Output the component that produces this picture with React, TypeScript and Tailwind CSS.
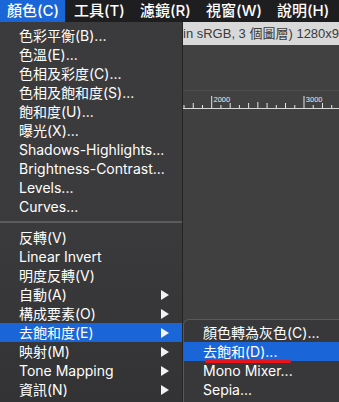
import React from 'react';

type Item = { label: string; sub?: boolean; active?: boolean };

const groupA: Item[] = [
  { label: '色彩平衡(B)...' },
  { label: '色溫(E)...' },
  { label: '色相及彩度(C)...' },
  { label: '色相及飽和度(S)...' },
  { label: '飽和度(U)...' },
  { label: '曝光(X)...' },
  { label: 'Shadows-Highlights...' },
  { label: 'Brightness-Contrast...' },
  { label: 'Levels...' },
  { label: 'Curves...' },
];

const groupB: Item[] = [
  { label: '反轉(V)' },
  { label: 'Linear Invert' },
  { label: '明度反轉(V)' },
  { label: '自動(A)', sub: true },
  { label: '構成要素(O)', sub: true },
  { label: '去飽和度(E)', sub: true, active: true },
  { label: '映射(M)', sub: true },
  { label: 'Tone Mapping', sub: true },
  { label: '資訊(N)', sub: true },
];

const subItems: Item[] = [
  { label: '顏色轉為灰色(C)...' },
  { label: '去飽和(D)...', active: true },
  { label: 'Mono Mixer...' },
  { label: 'Sepia...' },
];

const menuBar = [
  { label: '顏色(C)', w: 'w-[65px] pl-[7px] bg-[#1a66d8]' },
  { label: '工具(T)', w: 'w-[66px] pl-[9px]' },
  { label: '濾鏡(R)', w: 'w-[66px] pl-[9px]' },
  { label: '視窗(W)', w: 'w-[71px] pl-[9px]' },
  { label: '說明(H)', w: 'w-[71px] pl-[9px]' },
];

function Arrow() {
  return (
    <svg width="8" height="10" viewBox="0 0 8 10" className="shrink-0">
      <polygon points="0,0 8,5 0,10" fill="#f2f2f2" />
    </svg>
  );
}

function Row({ item }: { item: Item }) {
  return (
    <div
      className={`h-[19px] flex items-center justify-between pl-[19px] pr-[13px] ${
        item.active ? 'bg-[#1a66d8]' : ''
      }`}
    >
      <span className="whitespace-nowrap">{item.label}</span>
      {item.sub && <Arrow />}
    </div>
  );
}

function Ruler() {
  const ticks = [];
  for (let i = -3; i <= 13; i++) {
    const x = 28.7 + i * 9.23;
    let h = i % 2 === 0 ? 5 : 3;
    if (i === 5) h = 6;
    if (i === 0 || i === 10) h = 12;
    ticks.push(<line key={i} x1={x} x2={x} y1={18 - h} y2={18} stroke="#e6e6e6" strokeWidth="1" />);
  }
  return (
    <svg width="156" height="19" viewBox="0 0 156 19" className="block">
      <line x1="0" x2="156" y1="0.5" y2="0.5" stroke="#4c4c4c" />
      {ticks}
      <line x1="0" x2="156" y1="18.5" y2="18.5" stroke="#d8d8d8" />
      <text x="30.5" y="12" fontSize="7.5" fill="#ececec" fontFamily="Liberation Sans, sans-serif">2000</text>
      <text x="122.8" y="12" fontSize="7.5" fill="#ececec" fontFamily="Liberation Sans, sans-serif">3000</text>
    </svg>
  );
}

export default function App() {
  return (
    <div className="relative w-[339px] h-[402px] overflow-hidden bg-[#414141] text-white font-['Inter','Noto_Sans_CJK_TC',sans-serif]">
      {/* Menu bar */}
      <div className="h-[22px] flex bg-[#1e1e20] text-[15px] font-medium">
        {menuBar.map((m) => (
          <div key={m.label} className={`h-full flex items-center whitespace-nowrap ${m.w}`}>
            {m.label}
          </div>
        ))}
      </div>

      <div className="flex h-[380px]">
        {/* Color menu */}
        <div className="w-[183px] shrink-0 border-r border-[#242424] pt-[4px] text-[14px] bg-gradient-to-b from-[#3b3b3d] via-[#3b3b3d] to-[#333335]">
          {groupA.map((it) => (
            <Row key={it.label} item={it} />
          ))}
          <div className="h-[12px] flex items-center">
            <div className="h-[2px] w-full bg-[#5c5c5e]" />
          </div>
          {groupB.map((it) => (
            <Row key={it.label} item={it} />
          ))}
        </div>

        {/* Canvas area */}
        <div className="flex-1 min-w-0 flex flex-col">
          <div className="h-[23px] bg-[#d9d9d9] text-[#3a3a3a] text-[13px] flex items-center whitespace-nowrap overflow-hidden font-['Liberation_Sans','Noto_Sans_CJK_TC',sans-serif]">
            in sRGB, 3 個圖層) 1280x9
          </div>
          <div className="h-[45px]" />
          <Ruler />
          <div className="flex-1 bg-[#404040]" />
        </div>
      </div>

      {/* Submenu */}
      <div className="absolute left-[183px] top-[319px] w-[180px] h-[100px] rounded-[6px] border border-[#5a5a5c] bg-[#38383a] pt-[3px] text-[14px] overflow-hidden">
        {subItems.map((it) => (
          <div
            key={it.label}
            className={`h-[19px] flex items-center pl-[19px] whitespace-nowrap ${it.active ? 'bg-[#1a66d8]' : ''}`}
          >
            {it.label}
          </div>
        ))}
      </div>

      {/* red underline annotation */}
      <div className="absolute left-[205px] top-[360px] w-[86px] h-[3px] rounded-full bg-[#e8141c]" />
    </div>
  );
}
